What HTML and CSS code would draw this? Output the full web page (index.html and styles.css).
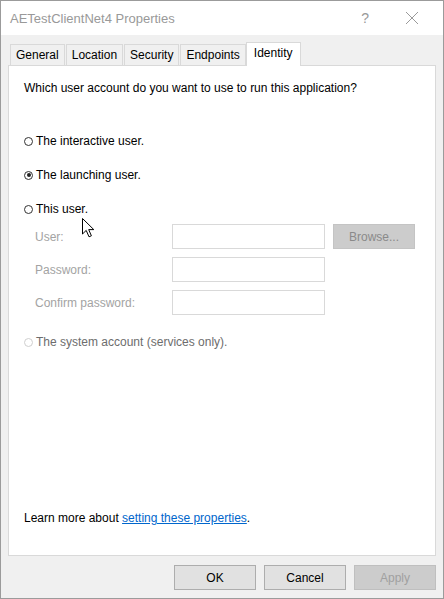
FILE: index.html
```html
<!DOCTYPE html>
<html>
<head>
<meta charset="utf-8">
<link rel="stylesheet" href="styles.css">
</head>
<body>
<div class="window">
  <div class="titlebar">
    <span class="title">AETestClientNet4 Properties</span>
    <span class="help">?</span>
    <span class="close">
      <svg width="14" height="14" viewBox="0 0 14 14"><path d="M1 1L13 13M13 1L1 13" stroke="#9a9a9a" stroke-width="1" fill="none"/></svg>
    </span>
  </div>
  <div class="body">
    <div class="tabs">
      <div class="tab">General</div>
      <div class="tab">Location</div>
      <div class="tab">Security</div>
      <div class="tab">Endpoints</div>
      <div class="tab selected">Identity</div>
    </div>
    <div class="panel">
      <p class="question">Which user account do you want to use to run this application?</p>
      <div class="radio-row first"><span class="radio"></span><span>The interactive user.</span></div>
      <div class="radio-row"><span class="radio checked"></span><span>The launching user.</span></div>
      <div class="radio-row"><span class="radio"></span><span>This user.</span></div>
      <div class="fields">
        <div class="field-row">
          <span class="field-label">User:</span>
          <span class="input"></span>
          <span class="browse">Browse...</span>
        </div>
        <div class="field-row">
          <span class="field-label">Password:</span>
          <span class="input"></span>
        </div>
        <div class="field-row">
          <span class="field-label">Confirm password:</span>
          <span class="input"></span>
        </div>
      </div>
      <div class="radio-row system"><span class="radio disabled"></span><span>The system account (services only).</span></div>
      <div class="spacer"></div>
      <p class="learn">Learn more about <a href="#" class="link">setting these properties</a>.</p>
      <svg class="cursor" width="13" height="20" viewBox="0 0 13 20"><path d="M0.5 0.5 L0.5 16 L4.2 12.4 L7 18.8 L9.4 17.8 L6.7 11.6 L11.8 11.6 Z" fill="#fff" stroke="#000" stroke-width="1" stroke-linejoin="miter"/></svg>
    </div>
    <div class="buttons">
      <span class="btn">OK</span>
      <span class="btn">Cancel</span>
      <span class="btn disabled">Apply</span>
    </div>
  </div>
</div>
</body>
</html>
```
FILE: styles.css
```css
html, body {
  margin: 0;
  padding: 0;
  background: #f0f0f0;
}
body {
  font-family: "Liberation Sans", Arial, sans-serif;
  font-size: 12px;
  color: #000;
}
.window {
  width: 444px;
  height: 599px;
  box-sizing: border-box;
  border: 1px solid #9b9b9b;
  display: flex;
  flex-direction: column;
  background: #f0f0f0;
}
.titlebar {
  height: 34px;
  background: #fff;
  display: flex;
  align-items: center;
  flex-shrink: 0;
}
.title {
  font-size: 13px;
  color: #999;
  margin-left: 9px;
  flex: 1;
}
.help {
  font-size: 14px;
  color: #999;
  margin-right: 36px;
}
.close {
  display: flex;
  margin-right: 24px;
}
.body {
  flex: 1;
  display: flex;
  flex-direction: column;
  padding: 7px 7px 0 7px;
}
.tabs {
  display: flex;
  height: 23px;
  align-items: flex-end;
  padding-left: 2px;
  position: relative;
  z-index: 1;
}
.tab {
  line-height: 20px;
  padding: 0 5px;
  margin-right: 1px;
  border: 1px solid #d9d9d9;
  border-bottom: none;
  background: #f0f0f0;
  box-sizing: border-box;
  height: 21px;
}
.tab.selected {
  background: #fff;
  height: 24px;
  line-height: 20px;
  margin-left: -1px;
  padding: 0 7px;
  margin-bottom: -1px;
}
.panel {
  height: 491px;
  box-sizing: border-box;
  background: #fff;
  border: 1px solid #d9d9d9;
  padding: 0 0 0 15px;
  display: flex;
  flex-direction: column;
  position: relative;
}
.question {
  margin: 15px 0 0 0;
  line-height: 15px;
}
.radio-row {
  display: flex;
  align-items: center;
  height: 15px;
  margin-top: 19px;
}
.radio-row.first {
  margin-top: 37px;
}
.radio {
  width: 9px;
  height: 9px;
  border: 1px solid #333;
  border-radius: 50%;
  box-sizing: border-box;
  margin-right: 3px;
  margin-top: 1px;
  position: relative;
  flex-shrink: 0;
}
.radio.checked::after {
  content: "";
  position: absolute;
  left: 1.5px;
  top: 1.5px;
  width: 4px;
  height: 4px;
  border-radius: 50%;
  background: #222;
}
.radio.disabled {
  border-color: #cfcfcf;
}
.system {
  color: #6d6d6d;
  margin-top: 19px;
}
.fields {
  display: flex;
  flex-direction: column;
  gap: 8px;
  margin-top: 8px;
}
.field-row {
  display: flex;
  align-items: center;
  height: 25px;
}
.field-label {
  width: 137px;
  padding-left: 11px;
  color: #a3a3a3;
}
.input {
  width: 153px;
  height: 25px;
  box-sizing: border-box;
  border: 1px solid #d9d9d9;
  background: #fff;
}
.browse {
  width: 82px;
  height: 25px;
  margin-left: 8px;
  box-sizing: border-box;
  background: #cccccc;
  border: 1px solid #c4c4c4;
  color: #8a8a8a;
  display: flex;
  align-items: center;
  justify-content: center;
}
.spacer {
  flex: 1;
}
.learn {
  margin: 0 0 29px 0;
  line-height: 15px;
}
.link {
  color: #0066cc;
  text-decoration: underline;
}
.cursor {
  position: absolute;
  left: 73px;
  top: 152px;
}
.buttons {
  display: flex;
  justify-content: flex-end;
  gap: 8px;
  margin-top: 9px;
  padding-right: 0;
}
.btn {
  width: 82px;
  height: 25px;
  box-sizing: border-box;
  border: 1px solid #adadad;
  background: #e1e1e1;
  display: flex;
  align-items: center;
  justify-content: center;
}
.btn.disabled {
  background: #cccccc;
  border-color: #bfbfbf;
  color: #a0a0a0;
}
```
